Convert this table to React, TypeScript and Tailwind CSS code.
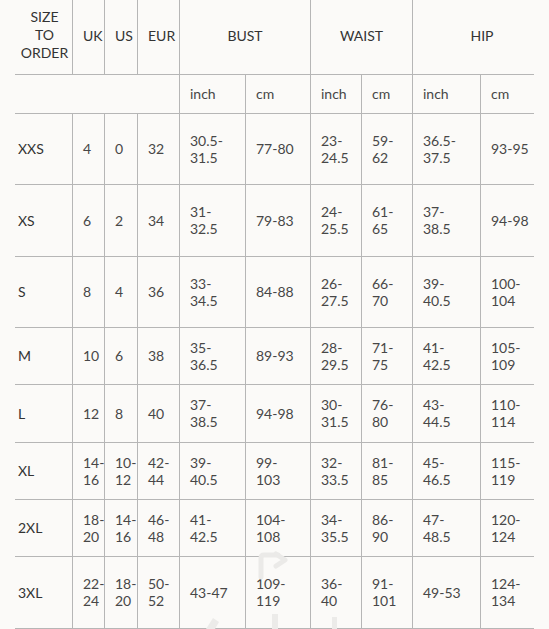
import React from "react";

type Row = { size: string; vals: string[][] };

const rows: Row[] = [
  { size: "XXS", vals: [["4"], ["0"], ["32"], ["30.5-", "31.5"], ["77-80"], ["23-", "24.5"], ["59-", "62"], ["36.5-", "37.5"], ["93-95"]] },
  { size: "XS", vals: [["6"], ["2"], ["34"], ["31-", "32.5"], ["79-83"], ["24-", "25.5"], ["61-", "65"], ["37-", "38.5"], ["94-98"]] },
  { size: "S", vals: [["8"], ["4"], ["36"], ["33-", "34.5"], ["84-88"], ["26-", "27.5"], ["66-", "70"], ["39-", "40.5"], ["100-", "104"]] },
  { size: "M", vals: [["10"], ["6"], ["38"], ["35-", "36.5"], ["89-93"], ["28-", "29.5"], ["71-", "75"], ["41-", "42.5"], ["105-", "109"]] },
  { size: "L", vals: [["12"], ["8"], ["40"], ["37-", "38.5"], ["94-98"], ["30-", "31.5"], ["76-", "80"], ["43-", "44.5"], ["110-", "114"]] },
  { size: "XL", vals: [["14-", "16"], ["10-", "12"], ["42-", "44"], ["39-", "40.5"], ["99-", "103"], ["32-", "33.5"], ["81-", "85"], ["45-", "46.5"], ["115-", "119"]] },
  { size: "2XL", vals: [["18-", "20"], ["14-", "16"], ["46-", "48"], ["41-", "42.5"], ["104-", "108"], ["34-", "35.5"], ["86-", "90"], ["47-", "48.5"], ["120-", "124"]] },
  { size: "3XL", vals: [["22-", "24"], ["18-", "20"], ["50-", "52"], ["43-47"], ["109-", "119"], ["36-", "40"], ["91-", "101"], ["49-53"], ["124-", "134"]] },
];

const line = "border-[#b6b6b6]";

function Cell({ lines, last }: { lines: string[]; last?: boolean }) {
  return (
    <div
      className={`flex flex-col justify-center pl-[10px] pb-[1px] border-b ${line} ${last ? "" : "border-r"} text-[#474747] leading-[17px]`}
    >
      {lines.map((l, i) => (
        <span key={i} className="whitespace-nowrap">{l}</span>
      ))}
    </div>
  );
}

export default function App() {
  return (
    <div
      className="relative w-[549px] h-[629px] overflow-hidden bg-[#fbfaf8] text-[14px]"
      style={{ fontFamily: "Lato, 'Open Sans', sans-serif" }}
    >
      <div className="ml-[15px] grid grid-cols-[58px_32px_33px_42px_66px_65px_51px_51px_68px_53px] grid-rows-[75px_39px_71px_72px_71px_57px_58px_57px_57px_72px]">
        {/* header row */}
        <div className={`flex flex-col items-center justify-center pb-[4px] pl-[2px] border-b border-r ${line} text-[#333333] leading-[18px] text-center`}>
          <span>SIZE</span>
          <span>TO</span>
          <span>ORDER</span>
        </div>
        <div className={`flex items-center pl-[10px] pb-[4px] border-b border-r ${line} text-[#333333]`}>UK</div>
        <div className={`flex items-center pl-[10px] pb-[4px] border-b border-r ${line} text-[#333333]`}>US</div>
        <div className={`flex items-center pl-[10px] pb-[4px] border-b border-r ${line} text-[#333333]`}>EUR</div>
        <div className={`col-span-2 flex items-center justify-center pb-[4px] border-b border-r ${line} text-[#333333]`}>BUST</div>
        <div className={`col-span-2 flex items-center justify-center pb-[4px] border-b border-r ${line} text-[#333333]`}>WAIST</div>
        <div className={`col-span-2 flex items-center justify-center pl-[17px] pb-[4px] border-b ${line} text-[#333333]`}>HIP</div>

        {/* sub header */}
        <div className={`col-span-4 border-b border-r ${line}`} />
        {["inch", "cm", "inch", "cm", "inch", "cm"].map((t, i) => (
          <div key={i} className={`flex items-center pl-[10px] pb-[1px] border-b ${i < 5 ? "border-r" : ""} ${line} text-[#474747]`}>
            {t}
          </div>
        ))}

        {rows.map((r) => (
          <React.Fragment key={r.size}>
            <div className={`flex items-center pl-[3px] pb-[1px] border-b border-r ${line} text-[#333333]`}>{r.size}</div>
            {r.vals.map((v, i) => (
              <Cell key={i} lines={v} last={i === 8} />
            ))}
          </React.Fragment>
        ))}
      </div>

      {/* faint watermark */}
      <svg className="pointer-events-none absolute left-0 top-0" width="549" height="629" viewBox="0 0 549 629">
        <g fill="none" stroke="#ebeae8" strokeWidth="5" strokeLinecap="round" strokeLinejoin="round">
          <path d="M261 577 L261 558 Q261 555 264 555 L278 555" />
          <path d="M276 566 L285 560 L276 554" />
        </g>
        <g fill="#ecebe9">
          <path d="M206 629 L213 618 L219 622 L215 629 Z" />
          <rect x="272" y="614" width="6" height="15" />
          <rect x="332" y="617" width="5" height="12" />
        </g>
      </svg>
    </div>
  );
}
